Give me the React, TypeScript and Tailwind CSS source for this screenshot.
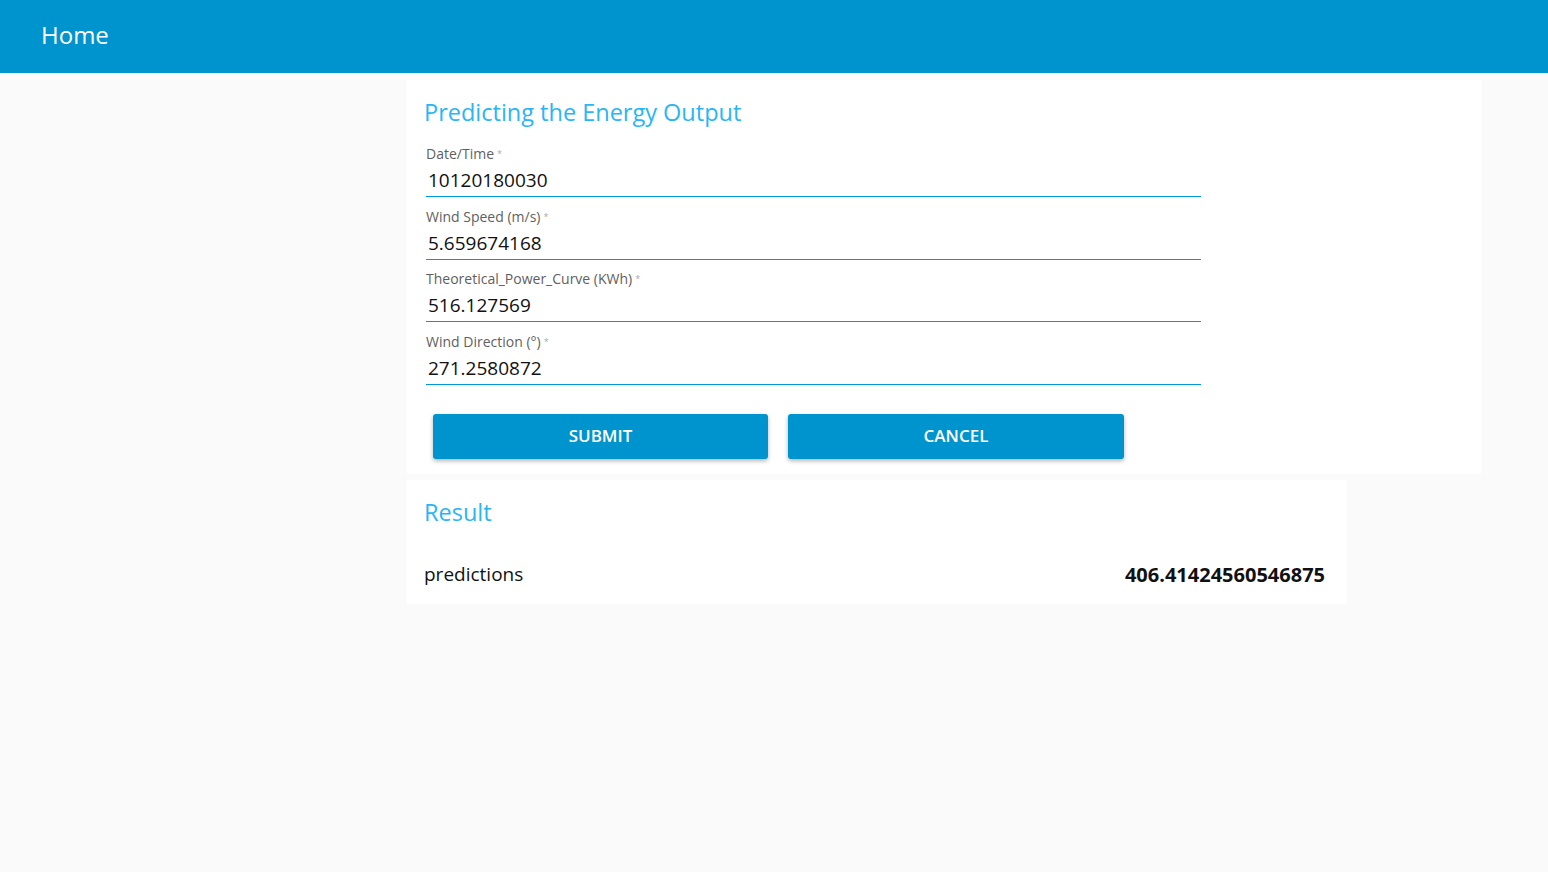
const fields = [
  { label: "Date/Time", value: "10120180030" },
  { label: "Wind Speed (m/s)", value: "5.659674168" },
  { label: "Theoretical_Power_Curve (KWh)", value: "516.127569" },
  { label: "Wind Direction (°)", value: "271.2580872" },
]

const App = () => {
  return (
    <div
      className="min-h-[872px] bg-[#fafafa]"
      style={{ fontFamily: '"Segoe UI", "Open Sans", sans-serif' }}
    >
      <header className="flex h-[73px] items-center bg-[#0094cf] px-[41px] pb-[3px]">
        <h1 className="text-[24px] leading-none text-white">Home</h1>
      </header>

      <main className="flex flex-col gap-[6px] pl-[407px] pt-[7px]">
        <section className="w-[1074px] bg-white px-[17px] pb-[15px] pt-[16px]">
          <h2 className="text-[23.5px] leading-[32px] text-[#29b6f6]">
            Predicting the Energy Output
          </h2>

          <form className="mt-[16px] flex w-[777px] flex-col gap-[9.5px] pl-[2px]">
            {fields.map((f) => (
              <div key={f.label} className="flex flex-col">
                <label className="text-[14px] leading-[20px] text-[#5f5f5f]">
                  {f.label}
                  <span className="ml-[3px] align-top text-[9px] text-[#aaa]">*</span>
                </label>
                <input
                  readOnly
                  value={f.value}
                  className="border-b border-[#0099d8] px-[2px] pb-[3px] pt-[3px] text-[19px] leading-[26px] text-[#111] outline-none"
                />
              </div>
            ))}

            <div className="ml-[7px] mt-[19.5px] flex gap-[20px]">
              <button
                type="button"
                className="h-[45px] w-[335px] rounded-[3px] bg-[#0094cf] text-[17px] font-semibold text-white shadow-[0_2px_4px_rgba(0,0,0,0.3)]"
              >
                SUBMIT
              </button>
              <button
                type="button"
                className="h-[45px] w-[336px] rounded-[3px] bg-[#0094cf] text-[17px] font-semibold text-white shadow-[0_2px_4px_rgba(0,0,0,0.3)]"
              >
                CANCEL
              </button>
            </div>
          </form>
        </section>

        <section className="w-[940px] bg-white px-[17px] pb-[15px] pt-[16px]">
          <h2 className="text-[23.5px] leading-[32px] text-[#29b6f6]">Result</h2>
          <div className="mt-[33px] flex h-[28px] items-center justify-between pr-[5px]">
            <span className="text-[19px] text-[#111]">predictions</span>
            <span className="text-[20px] font-bold text-[#111]">406.41424560546875</span>
          </div>
        </section>
      </main>
    </div>
  )
}

export default App
